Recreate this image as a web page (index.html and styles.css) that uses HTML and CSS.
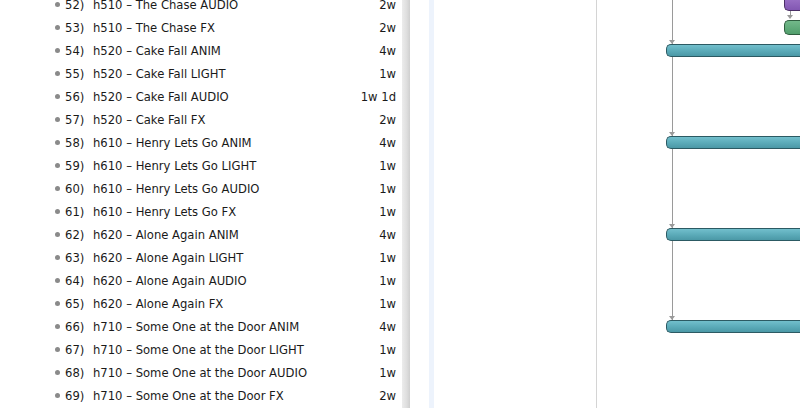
FILE: index.html
```html
<!DOCTYPE html>
<html>
<head>
<meta charset="utf-8">
<link rel="stylesheet" href="styles.css">
</head>
<body>
<div class="app">
  <div class="outline">
    <ul class="rows">
      <li class="row"><span class="num">52)</span><span class="title">h510 – The Chase AUDIO</span><span class="dur">2w</span></li>
      <li class="row"><span class="num">53)</span><span class="title">h510 – The Chase FX</span><span class="dur">2w</span></li>
      <li class="row"><span class="num">54)</span><span class="title">h520 – Cake Fall ANIM</span><span class="dur">4w</span></li>
      <li class="row"><span class="num">55)</span><span class="title">h520 – Cake Fall LIGHT</span><span class="dur">1w</span></li>
      <li class="row"><span class="num">56)</span><span class="title">h520 – Cake Fall AUDIO</span><span class="dur">1w 1d</span></li>
      <li class="row"><span class="num">57)</span><span class="title">h520 – Cake Fall FX</span><span class="dur">2w</span></li>
      <li class="row"><span class="num">58)</span><span class="title">h610 – Henry Lets Go ANIM</span><span class="dur">4w</span></li>
      <li class="row"><span class="num">59)</span><span class="title">h610 – Henry Lets Go LIGHT</span><span class="dur">1w</span></li>
      <li class="row"><span class="num">60)</span><span class="title">h610 – Henry Lets Go AUDIO</span><span class="dur">1w</span></li>
      <li class="row"><span class="num">61)</span><span class="title">h610 – Henry Lets Go FX</span><span class="dur">1w</span></li>
      <li class="row"><span class="num">62)</span><span class="title">h620 – Alone Again ANIM</span><span class="dur">4w</span></li>
      <li class="row"><span class="num">63)</span><span class="title">h620 – Alone Again LIGHT</span><span class="dur">1w</span></li>
      <li class="row"><span class="num">64)</span><span class="title">h620 – Alone Again AUDIO</span><span class="dur">1w</span></li>
      <li class="row"><span class="num">65)</span><span class="title">h620 – Alone Again FX</span><span class="dur">1w</span></li>
      <li class="row"><span class="num">66)</span><span class="title">h710 – Some One at the Door ANIM</span><span class="dur">4w</span></li>
      <li class="row"><span class="num">67)</span><span class="title">h710 – Some One at the Door LIGHT</span><span class="dur">1w</span></li>
      <li class="row"><span class="num">68)</span><span class="title">h710 – Some One at the Door AUDIO</span><span class="dur">1w</span></li>
      <li class="row"><span class="num">69)</span><span class="title">h710 – Some One at the Door FX</span><span class="dur">2w</span></li>
    </ul>
  </div>
  <div class="scrollbar"></div>
  <div class="gap"></div>
  <div class="stripe"></div>
  <div class="chart">
    <div class="gridline"></div>
    <div class="connector"></div>
    <div class="arrow a1"></div>
    <div class="arrow a2"></div>
    <div class="arrow a3"></div>
    <div class="arrow a4"></div>
    <div class="bar teal b1"></div>
    <div class="bar teal b2"></div>
    <div class="bar teal b3"></div>
    <div class="bar teal b4"></div>
    <div class="bar purple p1"></div>
    <div class="small-link"></div>
    <div class="arrow a5"></div>
    <div class="bar green g1"></div>
  </div>
</div>
</body>
</html>
```

FILE: styles.css
```css
html, body {
  margin: 0;
  padding: 0;
  background: #fff;
  overflow: hidden;
}
.app {
  display: flex;
  width: 800px;
  height: 408px;
  overflow: hidden;
}
.outline {
  width: 402px;
  flex: none;
  overflow: hidden;
  font-family: "DejaVu Sans", sans-serif;
  font-size: 11.6px;
  color: #1a1a1a;
}
.rows {
  list-style: none;
  margin: -7px 0 0 0;
  padding: 0 6px 0 55px;
}
.row {
  display: flex;
  align-items: center;
  height: 23px;
}
.row::before {
  content: "";
  width: 5px;
  height: 5px;
  border-radius: 50%;
  background: #8a8a8a;
  margin-right: 5px;
  flex: none;
}
.num {
  width: 28px;
  flex: none;
}
.title {
  flex: 1;
  white-space: nowrap;
}
.dur {
  flex: none;
  text-align: right;
}
.scrollbar {
  width: 8px;
  flex: none;
  background: linear-gradient(to right, #ececec, #dedede 60%, #cfcfcf);
}
.gap {
  width: 19px;
  flex: none;
}
.stripe {
  width: 5px;
  flex: none;
  background: #edf3fc;
}
.chart {
  flex: 1;
  position: relative;
}
.gridline {
  position: absolute;
  left: 162px;
  top: 0;
  bottom: 0;
  width: 1px;
  background: #d4d4d4;
}
.connector {
  position: absolute;
  left: 238px;
  top: 0;
  height: 322px;
  width: 1px;
  background: #9a9a9a;
}
.arrow {
  position: absolute;
  width: 0;
  height: 0;
  border-left: 3px solid transparent;
  border-right: 3px solid transparent;
  border-top: 4px solid #9a9a9a;
}
.a1 { left: 235px; top: 40px; }
.a2 { left: 235px; top: 132px; }
.a3 { left: 235px; top: 224px; }
.a4 { left: 235px; top: 316px; }
.a5 { left: 353px; top: 15px; }
.small-link {
  position: absolute;
  left: 356px;
  top: 11px;
  width: 1px;
  height: 5px;
  background: #9a9a9a;
}
.bar {
  position: absolute;
  border-radius: 5px 0 0 5px;
  box-sizing: border-box;
}
.teal {
  left: 232px;
  width: 200px;
  height: 13px;
  background: linear-gradient(to bottom, #72bfcc, #5aaab8 55%, #4b98a6);
  border: 1px solid #2c5a63;
  border-right: none;
}
.b1 { top: 44px; }
.b2 { top: 136px; }
.b3 { top: 228px; }
.b4 { top: 320px; }
.purple {
  left: 350px;
  top: -4px;
  width: 40px;
  height: 15px;
  background: linear-gradient(to bottom, #9d74c8, #8257b2);
  border: 1px solid #4a2f66;
  border-right: none;
}
.green {
  left: 350px;
  top: 20px;
  width: 40px;
  height: 15px;
  background: linear-gradient(to bottom, #72b98a, #519e6c);
  border: 1px solid #2f5e3f;
  border-right: none;
}
```
